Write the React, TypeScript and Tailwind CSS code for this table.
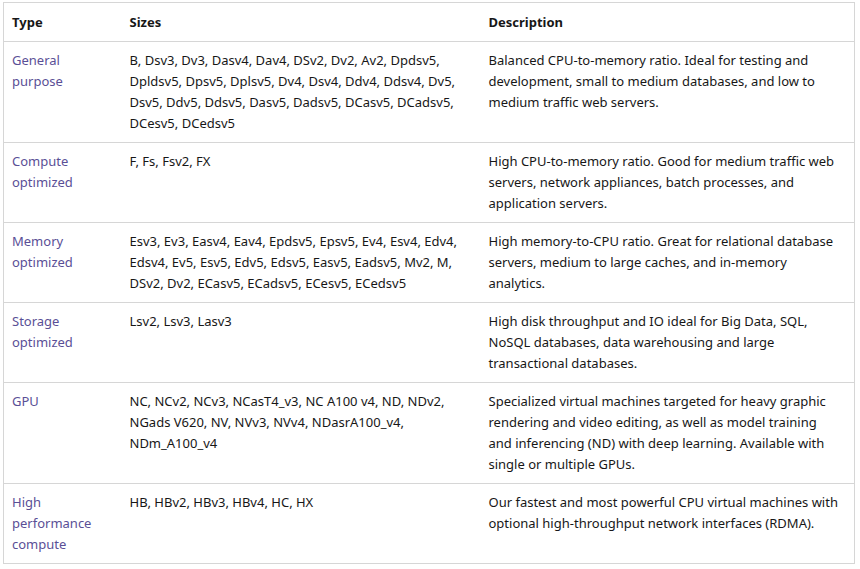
const ROWS = [
  {
    type: ["General", "purpose"],
    sizes: [
      "B, Dsv3, Dv3, Dasv4, Dav4, DSv2, Dv2, Av2, Dpdsv5,",
      "Dpldsv5, Dpsv5, Dplsv5, Dv4, Dsv4, Ddv4, Ddsv4, Dv5,",
      "Dsv5, Ddv5, Ddsv5, Dasv5, Dadsv5, DCasv5, DCadsv5,",
      "DCesv5, DCedsv5",
    ],
    desc: [
      "Balanced CPU-to-memory ratio. Ideal for testing and",
      "development, small to medium databases, and low to",
      "medium traffic web servers.",
    ],
  },
  {
    type: ["Compute", "optimized"],
    sizes: ["F, Fs, Fsv2, FX"],
    desc: [
      "High CPU-to-memory ratio. Good for medium traffic web",
      "servers, network appliances, batch processes, and",
      "application servers.",
    ],
  },
  {
    type: ["Memory", "optimized"],
    sizes: [
      "Esv3, Ev3, Easv4, Eav4, Epdsv5, Epsv5, Ev4, Esv4, Edv4,",
      "Edsv4, Ev5, Esv5, Edv5, Edsv5, Easv5, Eadsv5, Mv2, M,",
      "DSv2, Dv2, ECasv5, ECadsv5, ECesv5, ECedsv5",
    ],
    desc: [
      "High memory-to-CPU ratio. Great for relational database",
      "servers, medium to large caches, and in-memory",
      "analytics.",
    ],
  },
  {
    type: ["Storage", "optimized"],
    sizes: ["Lsv2, Lsv3, Lasv3"],
    desc: [
      "High disk throughput and IO ideal for Big Data, SQL,",
      "NoSQL databases, data warehousing and large",
      "transactional databases.",
    ],
  },
  {
    type: ["GPU"],
    sizes: [
      "NC, NCv2, NCv3, NCasT4_v3, NC A100 v4, ND, NDv2,",
      "NGads V620, NV, NVv3, NVv4, NDasrA100_v4,",
      "NDm_A100_v4",
    ],
    desc: [
      "Specialized virtual machines targeted for heavy graphic",
      "rendering and video editing, as well as model training",
      "and inferencing (ND) with deep learning. Available with",
      "single or multiple GPUs.",
    ],
  },
  {
    type: ["High", "performance", "compute"],
    sizes: ["HB, HBv2, HBv3, HBv4, HC, HX"],
    desc: [
      "Our fastest and most powerful CPU virtual machines with",
      "optional high-throughput network interfaces (RDMA).",
    ],
  },
];

function Lines({ lines }: { lines: string[] }) {
  return (
    <>
      {lines.map((l) => (
        <div key={l} className="whitespace-nowrap">
          {l}
        </div>
      ))}
    </>
  );
}

export default function App() {
  return (
    <div
      className="min-h-[569px] bg-white pl-[3px] pt-[2px] text-[13px] leading-[21px] text-[#171717]"
      style={{ fontFamily: '"Segoe UI", "Noto Sans", sans-serif' }}
    >
      <table className="w-[852px] table-fixed border-collapse border border-[#d6d6d6]">
        <colgroup>
          <col className="w-[118px]" />
          <col className="w-[359px]" />
          <col />
        </colgroup>
        <thead>
          <tr className="border-b border-[#d6d6d6]">
            <th className="px-2 pt-[9px] pb-[8px] text-left align-top font-bold">Type</th>
            <th className="px-2 pt-[9px] pb-[8px] text-left align-top font-bold">Sizes</th>
            <th className="px-2 pt-[9px] pb-[8px] text-left align-top font-bold">Description</th>
          </tr>
        </thead>
        <tbody>
          {ROWS.map((r) => (
            <tr key={r.type.join(" ")} className="border-b border-[#d6d6d6]">
              <td className="px-2 py-2 align-top text-[#5a4f96]">
                <Lines lines={r.type} />
              </td>
              <td className="px-2 py-2 align-top">
                <Lines lines={r.sizes} />
              </td>
              <td className="px-2 py-2 align-top">
                <Lines lines={r.desc} />
              </td>
            </tr>
          ))}
        </tbody>
      </table>
    </div>
  );
}
